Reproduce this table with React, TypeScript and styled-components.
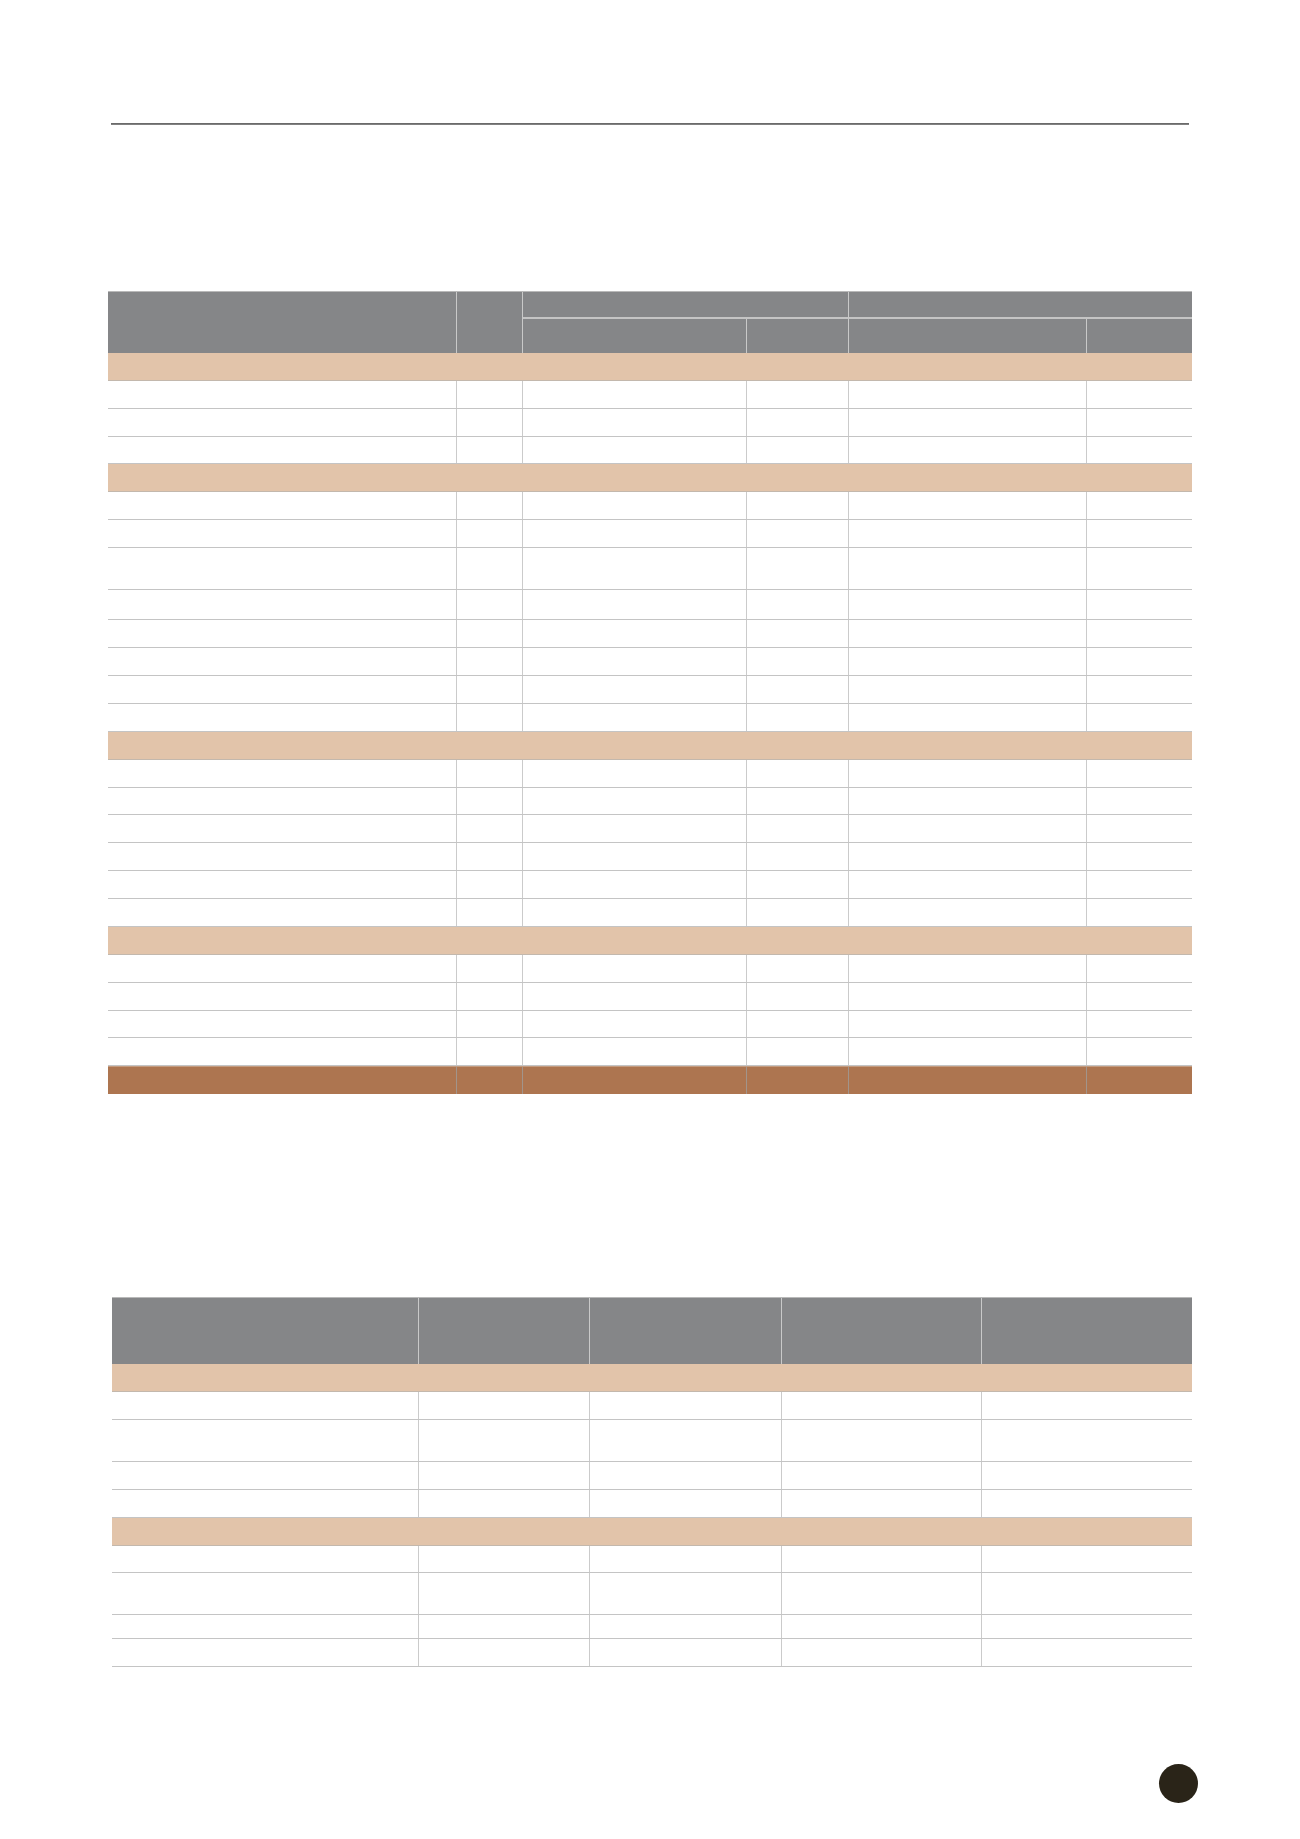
import React from 'react';
import styled, { createGlobalStyle } from 'styled-components';

const GlobalStyle = createGlobalStyle`
  html, body {
    margin: 0;
    padding: 0;
    background: #ffffff;
    font-family: "Liberation Sans", Arial, sans-serif;
  }
  * {
    box-sizing: border-box;
  }
`;

const Page = styled.div`
  width: 1300px;
  height: 1839px;
  padding-top: 123px;
  display: flex;
  flex-direction: column;
`;

const Rule = styled.div`
  margin-left: 111px;
  width: 1078px;
  height: 2px;
  background: linear-gradient(#5f5f5f, #8d8d8d);
`;

const TableWrap = styled.div<{ $left: number; $top: number; $width: number }>`
  margin-left: ${(p) => p.$left}px;
  margin-top: ${(p) => p.$top}px;
  width: ${(p) => p.$width}px;
  display: flex;
  flex-direction: column;
`;

const HeadGrid = styled.div<{ $cols: string; $rows: string }>`
  display: grid;
  grid-template-columns: ${(p) => p.$cols};
  grid-template-rows: ${(p) => p.$rows};
  background: #858688;
  border-top: 1px solid #b9b9b9;
`;

const HeadCell = styled.div<{ $col: string; $row: string; $split?: boolean; $last?: boolean }>`
  grid-column: ${(p) => p.$col};
  grid-row: ${(p) => p.$row};
  border-right: ${(p) => (p.$last ? 'none' : '1px solid #c9c9c9')};
  border-bottom: ${(p) => (p.$split ? '2px solid #c4c4c4' : 'none')};
`;

const SectionRow = styled.div<{ $h: number }>`
  height: ${(p) => p.$h}px;
  background: #e2c4aa;
  border-bottom: 1px solid #c3b8ad;
`;

const BodyRow = styled.div<{ $h: number; $cols: string }>`
  display: grid;
  grid-template-columns: ${(p) => p.$cols};
  height: ${(p) => p.$h}px;
  border-bottom: 1px solid #c4c4c4;
`;

const BodyCell = styled.div`
  border-right: 1px solid #cbcbcb;
  &:last-child {
    border-right: none;
  }
`;

const TotalRow = styled.div<{ $h: number; $cols: string }>`
  display: grid;
  grid-template-columns: ${(p) => p.$cols};
  height: ${(p) => p.$h}px;
  background: #ad7550;
  border-top: 1px solid #c49c80;
`;

const TotalCell = styled.div`
  border-right: 1px solid #a2948a;
  &:last-child {
    border-right: none;
  }
`;

const Footer = styled.div`
  margin-top: 97px;
  margin-left: 1159px;
  width: 39px;
  height: 39px;
  border-radius: 50%;
  background: #2a2418;
`;

type Line = { kind: 'section' | 'row' | 'total'; h: number };

const sec = (h = 28): Line => ({ kind: 'section', h });
const row = (h = 28): Line => ({ kind: 'row', h });

const colsA = [349, 66, 224, 102, 238, 105];
const colsB = [307, 171, 192, 200, 210];
const tpl = (c: number[]) => c.map((w) => `${w}px`).join(' ');

const linesA: Line[] = [
  sec(), row(), row(), row(27),
  sec(), row(), row(), row(42), row(30), row(), row(), row(), row(),
  sec(), row(), row(27), row(), row(), row(), row(),
  sec(), row(), row(), row(27), row(),
  { kind: 'total', h: 28 },
];

const linesB: Line[] = [
  sec(), row(), row(42), row(), row(),
  sec(), row(27), row(42), row(24), row(),
];

const Body: React.FC<{ lines: Line[]; cols: number[] }> = ({ lines, cols }) => (
  <>
    {lines.map((l, i) => {
      if (l.kind === 'section') return <SectionRow key={i} $h={l.h} />;
      if (l.kind === 'total')
        return (
          <TotalRow key={i} $h={l.h} $cols={tpl(cols)}>
            {cols.map((_, j) => <TotalCell key={j} />)}
          </TotalRow>
        );
      return (
        <BodyRow key={i} $h={l.h} $cols={tpl(cols)}>
          {cols.map((_, j) => <BodyCell key={j} />)}
        </BodyRow>
      );
    })}
  </>
);

const App: React.FC = () => (
  <>
    <GlobalStyle />
    <Page>
      <Rule />

      <TableWrap $left={108} $top={166} $width={1084}>
        <HeadGrid $cols={tpl(colsA)} $rows="27px 34px">
          <HeadCell $col="1" $row="1 / span 2" />
          <HeadCell $col="2" $row="1 / span 2" />
          <HeadCell $col="3 / span 2" $row="1" $split />
          <HeadCell $col="5 / span 2" $row="1" $split $last />
          <HeadCell $col="3" $row="2" />
          <HeadCell $col="4" $row="2" />
          <HeadCell $col="5" $row="2" />
          <HeadCell $col="6" $row="2" $last />
        </HeadGrid>
        <Body lines={linesA} cols={colsA} />
      </TableWrap>

      <TableWrap $left={112} $top={203} $width={1080}>
        <HeadGrid $cols={tpl(colsB)} $rows="66px">
          <HeadCell $col="1" $row="1" />
          <HeadCell $col="2" $row="1" />
          <HeadCell $col="3" $row="1" />
          <HeadCell $col="4" $row="1" />
          <HeadCell $col="5" $row="1" $last />
        </HeadGrid>
        <Body lines={linesB} cols={colsB} />
      </TableWrap>

      <Footer />
    </Page>
  </>
);

export default App;
